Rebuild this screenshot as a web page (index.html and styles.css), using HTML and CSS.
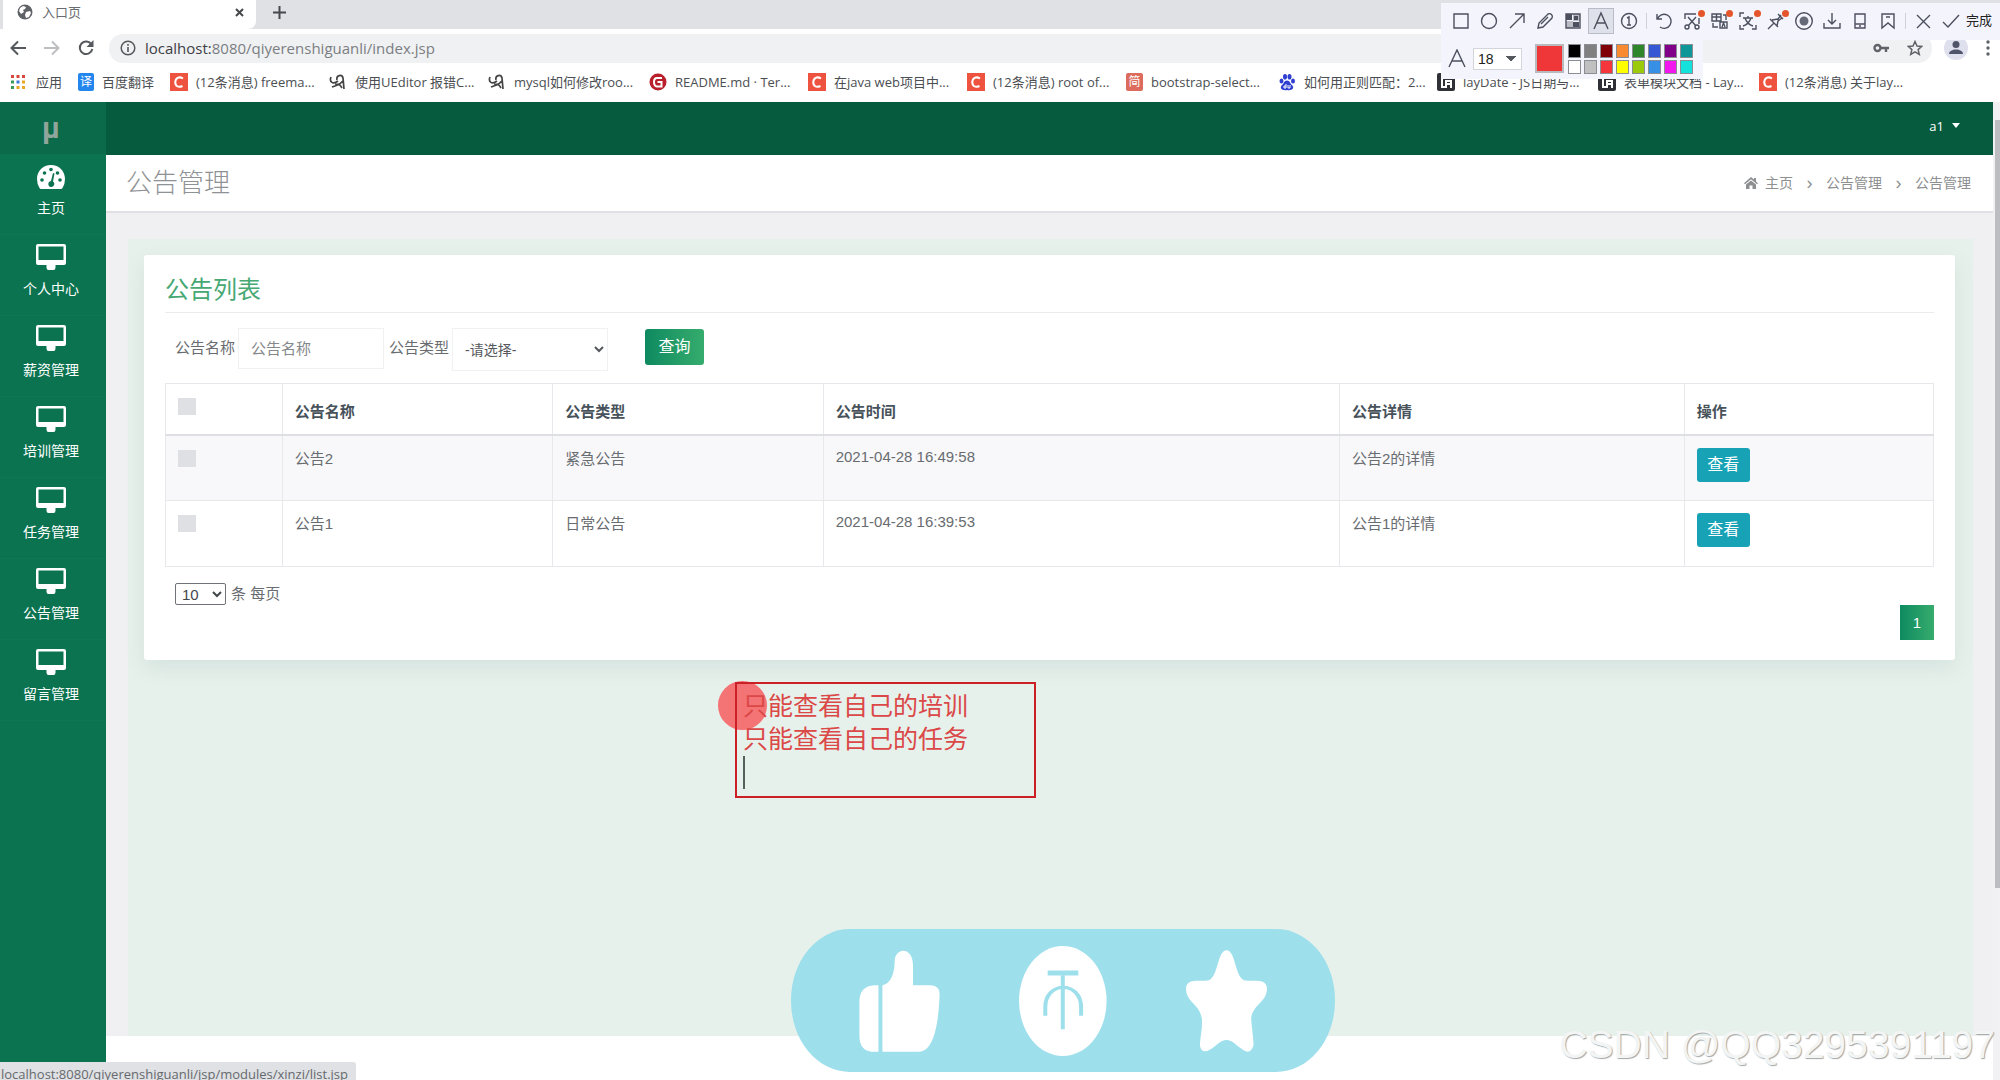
FILE: index.html
```html
<!DOCTYPE html>
<html lang="zh-CN">
<head>
<meta charset="utf-8">
<title>入口页</title>
<link rel="stylesheet" href="styles.css">
</head>
<body>
<svg class="defs" aria-hidden="true">
  <symbol id="monitor" viewBox="0 0 30 26"><path fill="currentColor" fill-rule="evenodd" d="M2 0h26a2 2 0 0 1 2 2v17a2 2 0 0 1-2 2h-8.500v2.500q0 2.500-2 2.500h-5q-2 0-2-2.500V21H2a2 2 0 0 1-2-2V2a2 2 0 0 1 2-2zM2.500 2.500v13.500h25V2.500z"/></symbol>
  <symbol id="csdn" viewBox="0 0 18 18"><path fill="#ee5340" d="M0 0h18v18H0z"/><path fill="none" stroke="#fff" stroke-width="2" d="M13 5.500C9 3 5.500 5 5.300 9s3 6 7.200 4"/></symbol>
  <symbol id="ue" viewBox="0 0 18 18"><path fill="none" stroke="#444" stroke-width="1.700" d="M2 4c-2 5 2 8 7 4M8 7c-1-5 5-6 6-2l1 11M14 8c-4 5-7 4-11 6M6 11c3 0 5 0 7 4"/></symbol>
  <symbol id="layui" viewBox="0 0 18 18"><rect width="18" height="18" rx="2" fill="#2f3136"/><path fill="none" stroke="#fff" stroke-width="2" d="M5 3v11h3M9 15V8h5v7M9 11h5"/></symbol>
</svg>

<header class="browser">
  <div class="tabs">
    <div class="tab">
      <svg class="i16" viewBox="0 0 16 16"><circle cx="8" cy="8" r="7.500" fill="#5f6368"/><path fill="#fff" d="M3 4l3-2 3 1-1 2-2 1 1 2-3 2-2-3zM9 8l4-1 1 2-2 4-3 1-1-3z"/></svg>
      <span class="tab-title">入口页</span>
      <button class="plain" aria-label="关闭标签页"><svg width="9" height="9" viewBox="0 0 9 9"><path stroke="#45484c" stroke-width="2" d="M1 1l7 7M8 1L1 8"/></svg></button>
    </div>
    <button class="plain new-tab" aria-label="新标签页"><svg width="13" height="13" viewBox="0 0 13 13"><path stroke="#45484c" stroke-width="2" d="M6.500 0v13M0 6.500h13"/></svg></button>
  </div>
  <div class="nav">
    <button class="plain" aria-label="后退"><svg width="16" height="16" viewBox="0 0 16 16"><path fill="none" stroke="#55585c" stroke-width="2" d="M16 8H2M8 1.500L1.500 8 8 14.500"/></svg></button>
    <button class="plain" aria-label="前进"><svg width="16" height="16" viewBox="0 0 16 16"><path fill="none" stroke="#bcbec1" stroke-width="2" d="M0 8h14M8 1.500L14.500 8 8 14.500"/></svg></button>
    <button class="plain" aria-label="刷新"><svg width="16" height="16" viewBox="0 0 16 16"><path fill="none" stroke="#55585c" stroke-width="2" d="M13.500 4.500A6.300 6.300 0 1 0 14.300 9"/><path fill="#55585c" d="M15.500 0v7h-7z"/></svg></button>
    <div class="address">
      <svg class="i16" viewBox="0 0 16 16"><circle cx="8" cy="8" r="6.800" fill="none" stroke="#55585c" stroke-width="1.500"/><path stroke="#55585c" stroke-width="1.600" d="M8 7v5M8 4v1.700"/></svg>
      <span class="url"><b>localhost:</b>8080/qiyerenshiguanli/index.jsp</span>
      <svg class="key" width="16" height="10" viewBox="0 0 16 10"><circle cx="4.500" cy="5" r="3" fill="none" stroke="#5f6368" stroke-width="2.400"/><path fill="none" stroke="#5f6368" stroke-width="2.400" d="M7 5h9M13 5v4"/></svg>
      <svg class="i16" viewBox="0 0 16 16"><path fill="none" stroke="#5f6368" stroke-width="1.500" d="M8 1.500l2 4.500 4.800.4-3.700 3.200 1.200 4.800L8 11.800l-4.300 2.600 1.200-4.800L1.200 6.400 6 6z"/></svg>
    </div>
    <svg class="avatar" width="24" height="24" viewBox="0 0 24 24"><circle cx="12" cy="12" r="12" fill="#dfe0ee"/><circle cx="12" cy="8.500" r="3.500" fill="#50546a"/><path fill="#50546a" d="M5 18c0-6 14-6 14 0z"/></svg>
    <svg width="4" height="16" viewBox="0 0 4 16" fill="#5f6368"><circle cx="2" cy="2" r="1.700"/><circle cx="2" cy="8" r="1.700"/><circle cx="2" cy="14" r="1.700"/></svg>
  </div>
  <nav class="bookmarks">
    <a class="apps" href="#"><svg class="i16" viewBox="0 0 16 16"><path fill="#d9483b" d="M1 1h3v3H1zM6.500 1h3v3h-3zM12 1h3v3h-3z"/><path fill="#3a9b57" d="M1 6.500h3v3H1z"/><path fill="#3b78d8" d="M6.500 6.500h3v3h-3z"/><path fill="#e8a820" d="M12 6.500h3v3h-3zM12 12h3v3h-3zM6.500 12h3v3h-3z"/><path fill="#3a9b57" d="M1 12h3v3H1z"/></svg>应用</a>
    <a class="fanyi" href="#"><span class="chip blue">译</span>百度翻译</a>
    <a href="#"><svg class="i18"><use href="#csdn"/></svg>(12条消息) freema...</a>
    <a href="#"><svg class="i18"><use href="#ue"/></svg>使用UEditor 报错C...</a>
    <a class="wide" href="#"><svg class="i18"><use href="#ue"/></svg>mysql如何修改roo...</a>
    <a href="#"><svg class="i18" viewBox="0 0 18 18"><circle cx="9" cy="9" r="8.500" fill="#b9202c"/><path fill="none" stroke="#fff" stroke-width="2" d="M13 5H8Q5 5 5 9t3 4.500h4.500V9H8.500"/></svg>README.md · Ter...</a>
    <a href="#"><svg class="i18"><use href="#csdn"/></svg>在java web项目中...</a>
    <a href="#"><svg class="i18"><use href="#csdn"/></svg>(12条消息) root of...</a>
    <a class="narrow" href="#"><span class="chip coral">简</span>bootstrap-select...</a>
    <a href="#"><svg class="i18" viewBox="0 0 18 18" fill="#2f3fd0"><ellipse cx="3.500" cy="8" rx="2" ry="2.600"/><ellipse cx="7" cy="3.800" rx="2" ry="2.800"/><ellipse cx="11.500" cy="3.800" rx="2" ry="2.800"/><ellipse cx="15" cy="8" rx="2" ry="2.600"/><path d="M9 7.500c3 0 3 3 5 4.500 3 3 0 6-5 5-5 1-8-2-5-5 2-1.500 2-4.500 5-4.500z"/><path fill="none" stroke="#fff" d="M8 11v4H6v-2h2M10 12v3h2v-3"/></svg>如何用正则匹配：2...</a>
    <a class="wide" href="#"><svg class="i18"><use href="#layui"/></svg>layDate - JS日期与...</a>
    <a class="wide" href="#"><svg class="i18"><use href="#layui"/></svg>表单模块文档 - Lay...</a>
    <a href="#"><svg class="i18"><use href="#csdn"/></svg>(12条消息) 关于lay...</a>
  </nav>
</header>

<div class="app">
  <aside class="sidebar">
    <a class="brand" href="#">μ</a>
    <a class="side-item" href="#"><svg width="28" height="24" viewBox="0 0 28 24"><path fill="currentColor" d="M14 0C6 0 0 6 0 14q0 5 2.500 9 .5 1 1.500 1h20q1 0 1.500-1Q28 19 28 14C28 6 22 0 14 0z"/><g fill="#0b7350"><circle cx="5" cy="15" r="1.800"/><circle cx="7.500" cy="8" r="1.800"/><circle cx="14" cy="4.500" r="1.800"/><circle cx="20.500" cy="8" r="1.800"/><circle cx="23" cy="15" r="1.800"/><path d="M16 8l1.500.5-1.500 8a3 3 0 1 1-2-.5z"/></g></svg>主页</a>
    <a class="side-item" href="#"><svg width="30" height="26"><use href="#monitor"/></svg>个人中心</a>
    <a class="side-item" href="#"><svg width="30" height="26"><use href="#monitor"/></svg>薪资管理</a>
    <a class="side-item" href="#"><svg width="30" height="26"><use href="#monitor"/></svg>培训管理</a>
    <a class="side-item" href="#"><svg width="30" height="26"><use href="#monitor"/></svg>任务管理</a>
    <a class="side-item" href="#"><svg width="30" height="26"><use href="#monitor"/></svg>公告管理</a>
    <a class="side-item" href="#"><svg width="30" height="26"><use href="#monitor"/></svg>留言管理</a>
  </aside>

  <main class="main">
    <div class="topbar"><button class="plain user">a1<svg width="8" height="5" viewBox="0 0 8 5"><path fill="#fff" d="M0 0h8L4 5z"/></svg></button></div>
    <div class="page-head">
      <h1>公告管理</h1>
      <nav class="crumbs">
        <a href="#"><svg width="14" height="12" viewBox="0 0 14 12" fill="#8d8f91"><path d="M7 0l3 2.600V1h2v3.400l2 1.800-1 1-6-5-6 5-1-1z"/><path d="M7 3.500l5 4V12H8.500V8.500h-3V12H2V7.500z"/></svg>主页</a>
        <span class="sep">›</span><a href="#">公告管理</a><span class="sep">›</span><span>公告管理</span>
      </nav>
    </div>
    <div class="content">
      <section class="panel">
        <div class="card">
          <h2>公告列表</h2>
          <form class="filters">
            <label for="name">公告名称</label>
            <input id="name" type="text" placeholder="公告名称">
            <label class="type-label" for="type">公告类型</label>
            <select id="type"><option>-请选择-</option></select>
            <button class="query" type="button">查询</button>
          </form>
          <table>
            <colgroup><col class="c-check"><col class="c-name"><col class="c-name"><col class="c-time"><col class="c-detail"><col class="c-action"></colgroup>
            <thead><tr><th class="check"><input type="checkbox" aria-label="全选"></th><th>公告名称</th><th>公告类型</th><th>公告时间</th><th>公告详情</th><th>操作</th></tr></thead>
            <tbody>
              <tr><td class="check"><input type="checkbox" aria-label="选择公告2"></td><td>公告2</td><td>紧急公告</td><td class="time">2021-04-28 16:49:58</td><td>公告2的详情</td><td><button class="view" type="button">查看</button></td></tr>
              <tr><td class="check"><input type="checkbox" aria-label="选择公告1"></td><td>公告1</td><td>日常公告</td><td class="time">2021-04-28 16:39:53</td><td>公告1的详情</td><td><button class="view" type="button">查看</button></td></tr>
            </tbody>
          </table>
          <div class="page-size"><select id="size"><option>10</option></select><label for="size">条 每页</label></div>
          <div class="pager"><button type="button">1</button></div>
        </div>
      </section>
    </div>
  </main>
  <div class="scrollbar"><div class="thumb"></div></div>
</div>

<div class="status">localhost:8080/qiyerenshiguanli/jsp/modules/xinzi/list.jsp</div>

<div class="snip">
  <div class="tools">
    <button aria-label="矩形"><svg viewBox="0 0 20 20"><path d="M3 3h14v14H3z"/></svg></button>
    <button aria-label="椭圆"><svg viewBox="0 0 20 20"><circle cx="10" cy="10" r="7.500"/></svg></button>
    <button aria-label="箭头"><svg viewBox="0 0 20 20"><path d="M3 17L17 3M8 3h9v9"/></svg></button>
    <button aria-label="画笔"><svg viewBox="0 0 20 20"><path d="M3 17l1-5 9-9q2-1 3.500.5T17 7l-9 9zM6 13l7-7"/></svg></button>
    <button aria-label="马赛克"><svg viewBox="0 0 20 20"><path d="M3 3h14v14H3z"/><path fill="#4c4f5e" stroke="none" d="M10 3h7v7h-7zM3 10h7v7H3z" opacity=".35"/><path fill="#4c4f5e" stroke="none" d="M3 3h6v6H3zM11 5h4v4h-4zM10 11h6v5h-6z"/></svg></button>
    <button class="active" aria-label="文字"><svg viewBox="0 0 20 20"><path d="M3 18l7-16 7 16M5.500 12h9"/></svg></button>
    <button aria-label="序号"><svg viewBox="0 0 20 20"><circle cx="10" cy="10" r="7.500"/><path d="M8 7l2-1v8M8 14h4"/></svg></button>
    <i></i>
    <button aria-label="撤销"><svg viewBox="0 0 20 20"><path d="M3 3v5h5M3.500 8A7 7 0 1 1 6 16"/></svg></button>
    <button class="hot" aria-label="裁剪"><svg viewBox="0 0 20 20"><path d="M14 3H3v5M6 6l8 9M14 6l-8 9M17 7v6"/><circle cx="5" cy="16" r="2"/><circle cx="15" cy="16" r="2"/></svg></button>
    <button class="hot" aria-label="翻译"><svg viewBox="0 0 20 20"><path d="M2 3h9v7H2zM2 6h9M6.500 3v7M10 11h7v6h-7zM12 16l1.500-4 1.500 4M3 12v4h5M13 4h3v5"/></svg></button>
    <button class="hot" aria-label="文字识别"><svg viewBox="0 0 20 20"><path d="M6 2H2v4M2 14v4h4M14 18h4v-4M5 7h10M10 5v2M13 7q-2 6-8 8M7 7q2 6 8 8"/></svg></button>
    <button class="hot" aria-label="钉图"><svg viewBox="0 0 20 20"><path d="M2 18l6-6M4 8l8 8M6 9l6-1 3-4M11 15l1-5 4-3M12 3l5 5"/></svg></button>
    <button aria-label="录制"><svg viewBox="0 0 20 20"><circle cx="10" cy="10" r="8.300"/><circle cx="10" cy="10" r="4.500" fill="#666978" stroke="none"/></svg></button>
    <button aria-label="保存"><svg viewBox="0 0 20 20"><path d="M10 2v11M6 9l4 4 4-4M2 12v5h16v-5"/></svg></button>
    <button aria-label="发送到手机"><svg viewBox="0 0 20 20"><path d="M5 3h10v14H5zM5 13h10M9 15h2"/></svg></button>
    <button aria-label="收藏"><svg viewBox="0 0 20 20"><path d="M4 3h12v14l-6-5-6 5zM8 6h4"/></svg></button>
    <i></i>
    <button aria-label="取消"><svg viewBox="0 0 20 20"><path d="M4 4l13 13M17 4L4 17"/></svg></button>
    <button class="done"><svg viewBox="0 0 20 20"><path d="M2 11l5 5L18 4"/></svg>完成</button>
  </div>
  <div class="options">
    <svg viewBox="0 0 20 20"><path d="M2 18L10 1l8 17M5 12h10"/></svg>
    <select aria-label="字号"><option>18</option></select>
    <span class="current"></span>
    <div class="swatches">
      <span class="s-black"></span><span class="s-gray"></span><span class="s-maroon"></span><span class="s-orange"></span><span class="s-green"></span><span class="s-blue"></span><span class="s-purple"></span><span class="s-teal"></span>
      <span class="s-white"></span><span class="s-silver"></span><span class="s-red"></span><span class="s-yellow"></span><span class="s-lime"></span><span class="s-sky"></span><span class="s-pink"></span><span class="s-cyan"></span>
    </div>
  </div>
</div>

<div class="pointer"></div>
<div class="note">只能查看自己的培训<br>只能查看自己的任务<span class="caret"></span></div>

<div class="reactions">
  <svg width="81" height="102" viewBox="252 148 204 306" preserveAspectRatio="none" fill="#fff"><path d="M301 254h-10q-38 2-38 50v100q0 46 30 49h18zM311 254q30-8 31-75c2-40 46-42 46 15v60h45q22 2 22 25c-2 90-15 174-52 174h-92z"/></svg>
  <svg width="88" height="110" viewBox="656 136 221 330" preserveAspectRatio="none"><ellipse cx="766" cy="301" rx="110" ry="165" fill="#fff"/><g fill="none" stroke="#9edfec" stroke-width="10"><path stroke-width="15" d="M728 217h77"/><path d="M766 224v155l0 7M722 345v-25c0-80 90-80 90 0v25"/></g></svg>
  <svg width="81" height="102" viewBox="1078 151 204 305" preserveAspectRatio="none" fill="#fff"><path d="M1166 165q14-26 28 0c10 25 14 75 34 77 22 4 54-8 54 26-3 42-36 45-40 88 2 30 6 60 6 80q-8 32-30 10c-16-12-22-25-38-26-16 1-22 14-38 26q-25 20-29-10c1-30 7-50 5-80-6-46-38-46-40-88 0-34 32-22 54-26 20-2 24-52 34-77z"/></svg>
</div>
<div class="watermark">CSDN @QQ3295391197</div>
</body>
</html>
```
FILE: styles.css
```css
* { box-sizing: border-box; }
body {
  margin: 0;
  min-height: 100vh;
  position: relative;
  display: flex;
  flex-direction: column;
  overflow: hidden;
  background: #fff;
  color: #686c70;
  font: 15px/22px "Liberation Sans", "Noto Sans CJK SC", sans-serif;
}
a { color: inherit; text-decoration: none; }
button, input, select { font: inherit; color: inherit; margin: 0; }
svg { flex: none; display: block; }
.defs { position: absolute; width: 0; height: 0; }
.plain { border: 0; background: none; padding: 0; display: flex; align-items: center; }
.i16 { width: 16px; height: 16px; }
.i18 { width: 18px; height: 18px; }

/* Browser frame */
.browser { height: 102px; font-family: "Open Sans", "Noto Sans CJK SC", sans-serif; }
.tabs { height: 29px; background: #dfe1e5; display: flex; padding-left: 3px; }
.tab {
  width: 253px;
  background: #fff;
  border-radius: 0 0 8px 0;
  display: flex;
  align-items: center;
  padding: 0 12px 5px 14px;
  gap: 9px;
  font-size: 13px;
}
.tab-title { flex: 1; }
.new-tab { margin-left: 17px; padding-bottom: 5px; }
.nav { height: 38px; display: flex; align-items: center; padding: 0 10px; gap: 18px; }
.address {
  flex: 1;
  height: 29px;
  margin-left: -3px;
  border-radius: 14px;
  background: #f0f1f3;
  display: flex;
  align-items: center;
  gap: 9px;
  padding: 0 9px 0 11px;
  font-size: 15px;
}
.url { flex: 1; color: #7b7e82; }
.url b { font-weight: 400; color: #3c4043; }
.key { margin-right: 9px; }
.avatar { margin-left: -6px; }
.bookmarks { height: 32px; display: flex; gap: 16px; padding-left: 10px; font-size: 13px; color: #4b4e52; }
.bookmarks a { width: 143px; height: 30px; display: flex; align-items: center; gap: 8px; flex: none; white-space: nowrap; }
.bookmarks .apps { width: 52px; gap: 10px; }
.bookmarks .fanyi { width: 76px; }
.bookmarks .wide { width: 145px; }
.bookmarks .narrow { width: 136px; }
.chip { width: 17px; height: 18px; border-radius: 2px; color: #fff; font-size: 12px; line-height: 18px; text-align: center; }
.blue { background: #2386ee; }
.coral { background: #dc6a5d; }

/* Application shell */
.app { flex: 1; display: flex; }
.sidebar { width: 106px; background: #0b7350; color: #fff; margin-bottom: 17px; flex: none; }
.brand {
  display: block;
  height: 52px;
  background: #0a6a4a;
  color: #8fa59b;
  font: bold 29px/52px Roboto, sans-serif;
  text-align: center;
  padding-right: 4px;
}
.side-item {
  height: 81px;
  display: flex;
  flex-direction: column;
  align-items: center;
  justify-content: flex-end;
  gap: 8px;
  padding: 0 4px 15px 0;
  border-bottom: 1px solid #0e7754;
  font-size: 14px;
}
.main { flex: 1; min-width: 0; display: flex; flex-direction: column; }
.topbar { height: 53px; background: #065b3f; display: flex; justify-content: flex-end; padding: 0 33px 6px; }
.user { color: #fff; gap: 8px; font: 13px/20px "Open Sans", sans-serif; }
.page-head {
  height: 58px;
  display: flex;
  align-items: center;
  justify-content: space-between;
  padding: 0 22px 0 20px;
  border-bottom: 2px solid #dfe0e4;
}
h1 { margin: 0; font-size: 26px; line-height: 36px; font-weight: 300; color: #8f9295; }
.crumbs { display: flex; align-items: center; font-size: 14px; color: #8d8f91; }
.crumbs a { display: flex; align-items: center; gap: 7px; }
.sep { width: 33px; text-align: center; font-size: 18px; }
.content { flex: 1; background: #f0f0f3; padding: 26px 20px 0 22px; margin-bottom: 44px; display: flex; }
.panel { flex: 1; background: #e7f1ec; padding: 16px 18px 16px 16px; }
.card { background: #fff; border-radius: 3px; padding: 17px 21px 20px; box-shadow: 0 8px 20px rgba(80, 120, 120, .12); }
h2 {
  margin: 0;
  padding-bottom: 4px;
  border-bottom: 1px solid #ebecee;
  font-size: 24px;
  line-height: 36px;
  font-weight: 400;
  color: #46a873;
}
.filters { display: flex; align-items: flex-start; padding: 15px 0 12px 10px; }
.filters label { line-height: 40px; margin-right: 3px; }
.filters .type-label { margin-left: 5px; }
.filters input { width: 146px; height: 41px; border: 1px solid #f0f1f3; padding: 0 12px; background: #fff; }
.filters input::placeholder { color: #85888b; }
.filters select { width: 156px; height: 43px; border: 1px solid #f0f1f3; background: #fff; padding: 0 8px; color: #55585c; font-size: 14px; }
.query {
  width: 59px;
  height: 36px;
  margin: 1px 0 0 37px;
  border: 0;
  border-radius: 3px;
  background: linear-gradient(90deg, #0e8a60, #36ac6d);
  color: #fff;
  font-size: 16px;
}
table { width: 100%; table-layout: fixed; border-collapse: collapse; }
.c-check { width: 6.6%; }
.c-name { width: 15.3%; }
.c-time { width: 29.2%; }
.c-detail { width: 19.5%; }
.c-action { width: 14.1%; }
th, td { border: 1px solid #e7e8eb; padding: 12px; text-align: left; vertical-align: top; }
th { height: 51px; padding: 17px 12px 10px; color: #47525a; border-bottom: 2px solid #dddfe2; }
td { height: 66px; }
tbody tr:first-child { background: #f8f8fa; }
th.check, td.check { padding: 14px 12px 0; }
td.time { padding-top: 10px; font-size: 15px; }
.check input { appearance: none; display: block; width: 18px; height: 17px; background: #dfe0e3; }
.view { display: block; width: 53px; height: 34px; border: 0; border-radius: 3px; padding: 0; background: #18a2b6; color: #fff; font-size: 16px; }
.page-size { display: flex; align-items: center; gap: 5px; height: 38px; padding: 16px 0 0 10px; }
.page-size select { width: 51px; height: 22px; border: 1px solid #6f7276; border-radius: 2px; background: #fff; padding: 0 2px; line-height: 20px; color: #44474a; }
.pager { display: flex; justify-content: flex-end; }
.pager button { width: 34px; height: 35px; padding: 0; border: 0; color: #fff; background: linear-gradient(90deg, #0e8a60, #36ac6d); }
.scrollbar { width: 7px; background: #f1f1f3; padding: 18px 0 0 2px; }
.thumb { height: 80%; background: #bcbdc0; }

/* Link address shown at the window's foot */
.status {
  position: absolute;
  left: 0;
  bottom: 0;
  height: 18px;
  padding: 0 8px 0 1px;
  overflow: hidden;
  background: #dfe1e4;
  border-radius: 0 3px 0 0;
  color: #66696d;
  font: 13px/24px "Open Sans", sans-serif;
}

/* Capture toolbar floating over the window */
.snip { position: absolute; top: 3px; right: 0; width: 559px; color: #222; }
.snip svg { width: 20px; height: 20px; fill: none; stroke: #4c4f5e; stroke-width: 1.400; }
.tools { height: 37px; display: flex; align-items: center; padding: 0 0 2px 6px; background: #f4f5fc; }
.tools button { width: 28px; height: 24px; padding: 0 4px; border: 0; background: none; position: relative; flex: none; }
.tools .active { width: 24px; padding: 0 2px; margin: 0 2px; background: #dfe1ea; outline: 1px solid #b9bcc8; }
.tools i { width: 1px; height: 16px; margin: 0 3px; background: #cfd1d8; }
.hot::after { content: ""; position: absolute; top: 1px; right: 1px; width: 7px; height: 7px; border-radius: 50%; background: #e4552b; }
.tools .done { width: 58px; display: flex; align-items: center; gap: 5px; font-size: 13px; white-space: nowrap; }
.options { width: 262px; height: 39px; display: flex; align-items: center; padding: 0 0 2px 6px; background: #f4f5fc; }
.options select {
  appearance: none;
  width: 49px;
  height: 22px;
  margin-left: 6px;
  padding: 0 4px;
  border: 1px solid #d3d5dc;
  background: conic-gradient(from -32deg at 50% 100%, #55585c 64deg, transparent 0) 33px 7px / 9px 6px no-repeat #fff;
  background-image: linear-gradient(to bottom right, #55585c 50%, transparent 50%), linear-gradient(to bottom left, #55585c 50%, transparent 50%);
  background-size: 5px 6px;
  background-position: 37px 7px, 32px 7px;
  font-size: 14px;
  line-height: 20px;
}
.current { width: 29px; height: 29px; margin: 0 4px 0 13px; border: 2px solid #b9babd; background: #ef3639; }
.swatches { display: grid; grid-template-columns: repeat(8, 13px); gap: 2px 3px; }
.swatches span { height: 14px; border: 1px solid #8b8d92; }
.s-black { background: #000; }
.s-gray { background: #808080; }
.s-maroon { background: #800008; }
.s-orange { background: #f88a32; }
.s-green { background: #2f862a; }
.s-blue { background: #3658d4; }
.s-purple { background: #80008a; }
.s-teal { background: #0e9698; }
.s-white { background: #fff; }
.s-silver { background: #c0c0c0; }
.s-red { background: #f5363b; }
.s-yellow { background: #ff0; }
.s-lime { background: #9aca0a; }
.s-sky { background: #388fe6; }
.s-pink { background: #f216ee; }
.s-cyan { background: #14e0dc; }

/* Annotation drawn over the page */
.pointer { position: absolute; left: 718px; top: 681px; width: 49px; height: 49px; border-radius: 50%; background: rgba(248, 70, 75, .74); }
.note {
  position: absolute;
  left: 735px;
  top: 682px;
  width: 301px;
  height: 116px;
  padding: 6px;
  border: 2px solid #cb2026;
  color: #db4848;
  font-size: 25px;
  line-height: 33px;
}
.caret { display: block; width: 2px; height: 33px; background: #55605c; }

.reactions {
  position: absolute;
  left: 791px;
  top: 929px;
  width: 544px;
  height: 143px;
  padding: 0 68px;
  border-radius: 59px / 71px;
  background: #9edfec;
  display: flex;
  align-items: center;
  justify-content: space-between;
}
.watermark {
  position: absolute;
  right: 5px;
  bottom: 13px;
  color: #f3f5f5;
  font-size: 39px;
  line-height: 44px;
  white-space: nowrap;
  text-shadow: 1px 1px 1px #a3a6a7;
}
```
